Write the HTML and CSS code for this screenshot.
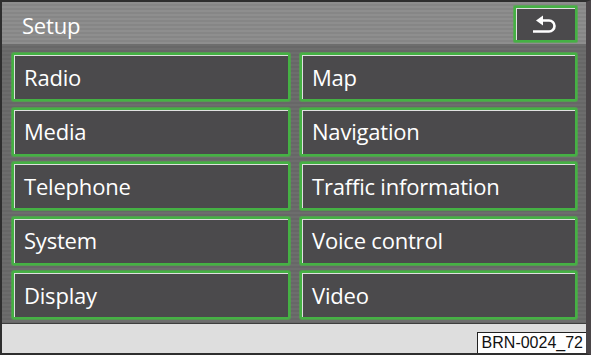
FILE: index.html
```html
<!DOCTYPE html>
<html>
<head>
<meta charset="utf-8">
<link rel="stylesheet" href="styles.css">
</head>
<body>
<div class="screen">
  <header class="header">
    <span class="title">Setup</span>
    <button class="back" aria-label="Back">
      <svg width="25" height="18" viewBox="0 0 25 18">
        <polygon points="4,5.5 11,0.5 11,10.5" fill="#fff"/>
        <path d="M10 5.5 H17 A5.5 5.5 0 0 1 17 16.5 H1" fill="none" stroke="#fff" stroke-width="2.6"/>
      </svg>
    </button>
  </header>
  <main class="grid">
    <button class="item">Radio</button>
    <button class="item">Map</button>
    <button class="item">Media</button>
    <button class="item">Navigation</button>
    <button class="item">Telephone</button>
    <button class="item">Traffic information</button>
    <button class="item">System</button>
    <button class="item">Voice control</button>
    <button class="item">Display</button>
    <button class="item">Video</button>
  </main>
  <footer class="footer">
    <span class="code">BRN-0024_72</span>
  </footer>
</div>
</body>
</html>
```
FILE: styles.css
```css
* { box-sizing: border-box; }
html, body { margin: 0; padding: 0; background: #3a3a3a; }
.screen {
  width: 591px;
  height: 355px;
  display: flex;
  flex-direction: column;
  border-left: 2px solid #2e2e2e;
  border-top: 2px solid #2e2e2e;
  border-right: 5px solid #4a4548;
  border-bottom: 2px solid #2e2e2e;
  background: #6b6b6b;
  font-family: "Open Sans", "Noto Sans", sans-serif;
}
.header {
  height: 42px;
  flex: none;
  display: flex;
  align-items: center;
  justify-content: space-between;
  padding: 0 9px 0 20px;
  background: repeating-linear-gradient(to bottom, #8e8e8e 0 2px, #868686 2px 4px);
}
.title {
  color: #fff;
  font-size: 22px;
  letter-spacing: -0.2px;
  padding-top: 3px;
}
.back {
  align-self: flex-start;
  width: 63px;
  height: 36px;
  margin-top: 4px;
  padding: 0;
  display: flex;
  align-items: center;
  justify-content: center;
  background: #4b4a4c;
  border: 2px solid #45b144;
  box-shadow: inset 1px 1px 0 #e0e0e0, 0 0 0 1px rgba(75, 175, 70, 0.7);
  border-radius: 1px;
}
.back svg { margin-left: -2px; }
.grid {
  flex: 1;
  display: grid;
  grid-template-columns: 278px 277px;
  grid-template-rows: repeat(5, 48px);
  column-gap: 10px;
  row-gap: 6.5px;
  padding: 9px 0 0 10px;
  background: repeating-linear-gradient(to bottom, #6d6d6d 0 2px, #676767 2px 4px);
  border-bottom: 1px solid #3e3e3e;
}
.item {
  margin: 0;
  padding: 0 0 1px 10px;
  text-align: left;
  font-family: "Open Sans", "Noto Sans", sans-serif;
  font-size: 22px;
  letter-spacing: -0.2px;
  color: #fff;
  background: #4b4a4c;
  border: 2px solid #45b144;
  box-shadow: inset 1px 1px 0 #e0e0e0, 0 0 0 1px rgba(75, 175, 70, 0.7);
  border-radius: 2px;
}
.footer {
  height: 29px;
  flex: none;
  background: #dedede;
  display: flex;
  justify-content: flex-end;
  align-items: flex-end;
}
.code {
  font-family: "Liberation Sans", Arial, sans-serif;
  font-size: 16px;
  color: #111;
  background: #fff;
  border: 1px solid #222;
  border-bottom: none;
  border-right: none;
  padding: 0 3px 0 4px;
  line-height: 19px;
  height: 21px;
}
```
